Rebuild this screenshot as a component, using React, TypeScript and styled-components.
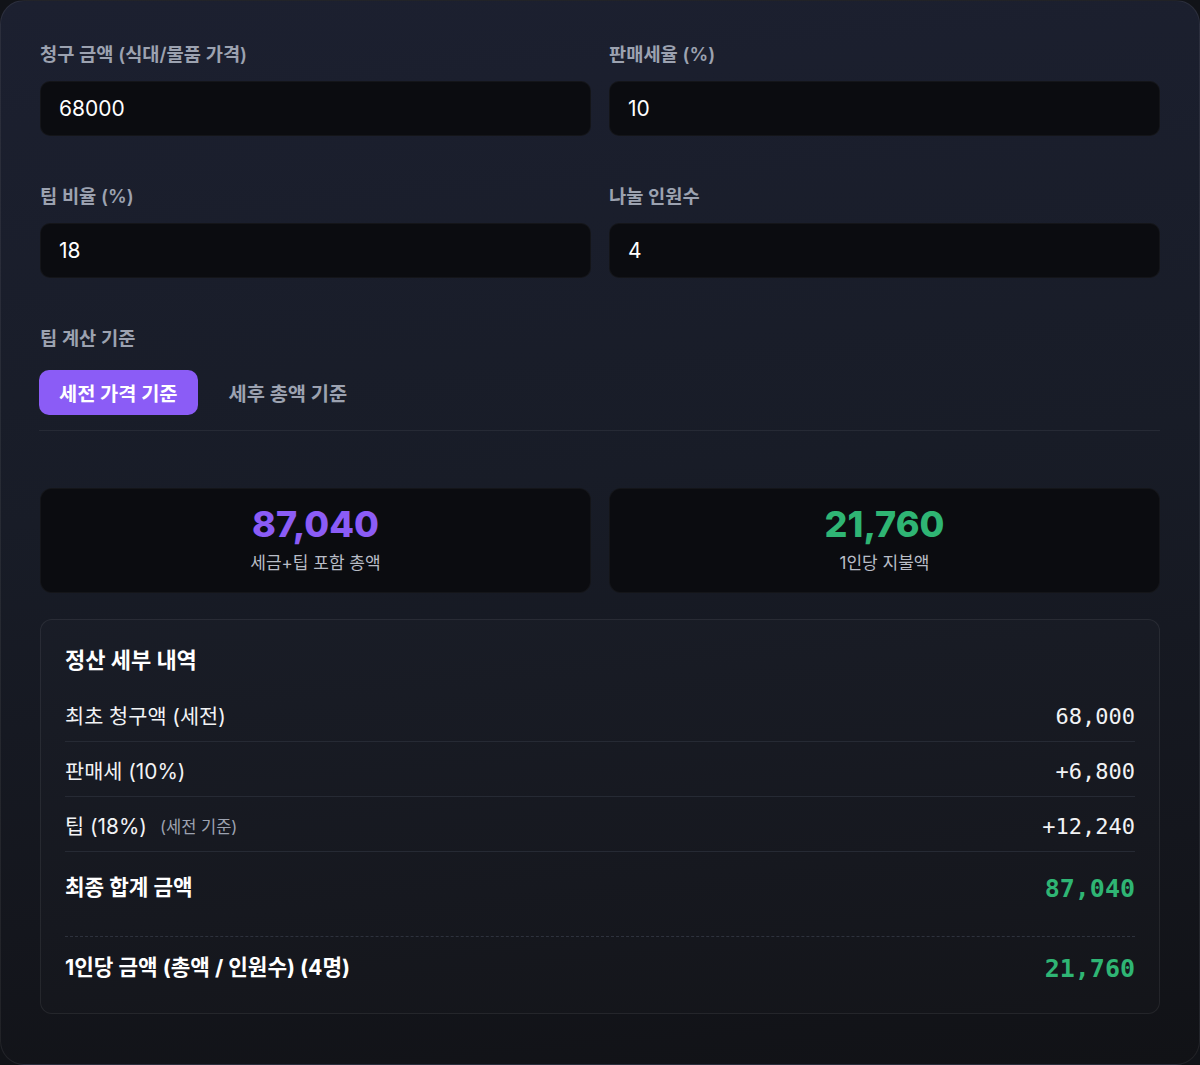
import React, { useState } from 'react';
import styled, { createGlobalStyle } from 'styled-components';

const GlobalStyle = createGlobalStyle`
  * {
    box-sizing: border-box;
  }
  body {
    margin: 0;
    background: #111318;
    font-family: Inter, 'Noto Sans CJK KR', sans-serif;
    -webkit-font-smoothing: antialiased;
  }
`;

const Card = styled.div`
  width: 1200px;
  min-height: 1064px;
  padding: 42px 39px 50px;
  border: 1px solid rgba(255, 255, 255, 0.07);
  border-radius: 24px;
  background: linear-gradient(175deg, #1c2030 0%, #181c27 45%, #14161d 80%, #111216 100%);
`;

const FieldGrid = styled.div`
  display: grid;
  grid-template-columns: 1fr 1fr;
  column-gap: 18px;
  row-gap: 49px;
  margin-bottom: 49px;
`;

const Field = styled.label`
  display: flex;
  flex-direction: column;
`;

const Label = styled.span`
  font-family: Inter, 'Noto Sans CJK KR', sans-serif;
  font-size: 18.7px;
  font-weight: 600;
  line-height: 24px;
  color: #9ca2b0;
  margin-bottom: 14px;
`;

const Input = styled.input`
  height: 55px;
  padding: 0 18px;
  border: 1px solid rgba(255, 255, 255, 0.04);
  border-radius: 10px;
  background: #0b0c10;
  color: #ffffff;
  font-family: Inter, 'Noto Sans CJK KR', sans-serif;
  font-size: 21px;
  outline: none;
`;

const TabSection = styled.div`
  display: flex;
  flex-direction: column;
`;

const Tabs = styled.div`
  display: flex;
  gap: 11px;
  margin: 5px 0 0 -1px;
  padding-bottom: 15px;
  border-bottom: 1px solid #262a35;
`;

const Tab = styled.button<{ $active: boolean }>`
  height: 45px;
  padding: 0 20px;
  border: none;
  border-radius: 10px;
  background: ${(p) => (p.$active ? '#8b5cf6' : 'transparent')};
  color: ${(p) => (p.$active ? '#ffffff' : '#9ca2b0')};
  font-family: Inter, 'Noto Sans CJK KR', sans-serif;
  font-size: 19.8px;
  font-weight: 700;
  cursor: pointer;
`;

const Stats = styled.div`
  display: grid;
  grid-template-columns: 1fr 1fr;
  gap: 18px;
  margin-top: 57px;
`;

const StatCard = styled.div`
  height: 105px;
  display: flex;
  flex-direction: column;
  align-items: center;
  justify-content: center;
  border: 1px solid rgba(255, 255, 255, 0.04);
  border-radius: 12px;
  background: #0b0c10;
  padding-bottom: 4px;
`;

const StatValue = styled.div<{ $color: string }>`
  font-family: Inter, sans-serif;
  font-size: 36px;
  font-weight: 800;
  line-height: 40px;
  color: ${(p) => p.$color};
`;

const StatLabel = styled.div`
  margin-top: 8px;
  font-family: Inter, 'Noto Sans CJK KR', sans-serif;
  font-size: 17px;
  line-height: 22px;
  color: #b9bdc7;
`;

const Details = styled.div`
  margin-top: 26px;
  padding: 24px;
  border: 1px solid rgba(255, 255, 255, 0.07);
  border-radius: 12px;
  background: rgba(255, 255, 255, 0.012);
`;

const DetailsTitle = styled.h3`
  margin: 1px 0 12px;
  font-family: Inter, 'Noto Sans CJK KR', sans-serif;
  font-size: 22px;
  font-weight: 700;
  line-height: 30px;
  color: #ffffff;
`;

const Row = styled.div`
  height: 55px;
  padding-top: 5px;
  display: flex;
  align-items: center;
  justify-content: space-between;
  border-bottom: 1px solid #262a34;
`;

const RowLabel = styled.span`
  display: flex;
  align-items: center;
  font-family: Inter, 'Noto Sans CJK KR', sans-serif;
  font-size: 20.8px;
  line-height: 26px;
  color: #f2f3f5;
`;

const Note = styled.span`
  margin-left: 13px;
  font-size: 16.5px;
  color: #9ca2b0;
`;

const Amount = styled.span`
  font-family: 'DejaVu Sans Mono', 'Liberation Mono', monospace;
  font-size: 22px;
  line-height: 26px;
  color: #f2f3f5;
`;

const TotalRow = styled.div<{ $dashed?: boolean }>`
  display: flex;
  align-items: center;
  justify-content: space-between;
  height: ${(p) => (p.$dashed ? '53px' : '64px')};
  padding-top: ${(p) => (p.$dashed ? '8px' : '6px')};
  margin-top: ${(p) => (p.$dashed ? '20px' : '0')};
  border-top: ${(p) => (p.$dashed ? '1px dashed #2e323d' : 'none')};
`;

const TotalLabel = styled.span`
  font-family: Inter, 'Noto Sans CJK KR', sans-serif;
  font-size: 21.3px;
  font-weight: 700;
  line-height: 30px;
  color: #ffffff;
`;

const TotalAmount = styled.span`
  font-family: 'DejaVu Sans Mono', 'Liberation Mono', monospace;
  font-size: 25px;
  font-weight: 700;
  line-height: 30px;
  color: #2fb574;
  padding-top: 3px;
`;

const fmt = (n: number) => n.toLocaleString('en-US');

export default function App() {
  const [bill, setBill] = useState('68000');
  const [taxRate, setTaxRate] = useState('10');
  const [tipRate, setTipRate] = useState('18');
  const [people, setPeople] = useState('4');
  const [basis, setBasis] = useState<'pre' | 'post'>('pre');

  const amount = Number(bill) || 0;
  const tax = Math.round((amount * (Number(taxRate) || 0)) / 100);
  const tipBase = basis === 'pre' ? amount : amount + tax;
  const tip = Math.round((tipBase * (Number(tipRate) || 0)) / 100);
  const total = amount + tax + tip;
  const count = Math.max(1, Number(people) || 1);
  const perPerson = Math.round(total / count);

  return (
    <>
      <GlobalStyle />
      <Card>
        <FieldGrid>
          <Field>
            <Label>청구 금액 (식대/물품 가격)</Label>
            <Input value={bill} onChange={(e) => setBill(e.target.value)} />
          </Field>
          <Field>
            <Label>판매세율 (%)</Label>
            <Input value={taxRate} onChange={(e) => setTaxRate(e.target.value)} />
          </Field>
          <Field>
            <Label>팁 비율 (%)</Label>
            <Input value={tipRate} onChange={(e) => setTipRate(e.target.value)} />
          </Field>
          <Field>
            <Label>나눌 인원수</Label>
            <Input value={people} onChange={(e) => setPeople(e.target.value)} />
          </Field>
        </FieldGrid>

        <TabSection>
          <Label>팁 계산 기준</Label>
          <Tabs>
            <Tab $active={basis === 'pre'} onClick={() => setBasis('pre')}>
              세전 가격 기준
            </Tab>
            <Tab $active={basis === 'post'} onClick={() => setBasis('post')}>
              세후 총액 기준
            </Tab>
          </Tabs>
        </TabSection>

        <Stats>
          <StatCard>
            <StatValue $color="#8b5cf6">{fmt(total)}</StatValue>
            <StatLabel>세금+팁 포함 총액</StatLabel>
          </StatCard>
          <StatCard>
            <StatValue $color="#2fb574">{fmt(perPerson)}</StatValue>
            <StatLabel>1인당 지불액</StatLabel>
          </StatCard>
        </Stats>

        <Details>
          <DetailsTitle>정산 세부 내역</DetailsTitle>
          <Row>
            <RowLabel>최초 청구액 (세전)</RowLabel>
            <Amount>{fmt(amount)}</Amount>
          </Row>
          <Row>
            <RowLabel>판매세 ({taxRate}%)</RowLabel>
            <Amount>+{fmt(tax)}</Amount>
          </Row>
          <Row>
            <RowLabel>
              팁 ({tipRate}%)
              <Note>({basis === 'pre' ? '세전 기준' : '세후 기준'})</Note>
            </RowLabel>
            <Amount>+{fmt(tip)}</Amount>
          </Row>
          <TotalRow>
            <TotalLabel>최종 합계 금액</TotalLabel>
            <TotalAmount>{fmt(total)}</TotalAmount>
          </TotalRow>
          <TotalRow $dashed>
            <TotalLabel>1인당 금액 (총액 / 인원수) ({count}명)</TotalLabel>
            <TotalAmount>{fmt(perPerson)}</TotalAmount>
          </TotalRow>
        </Details>
      </Card>
    </>
  );
}
